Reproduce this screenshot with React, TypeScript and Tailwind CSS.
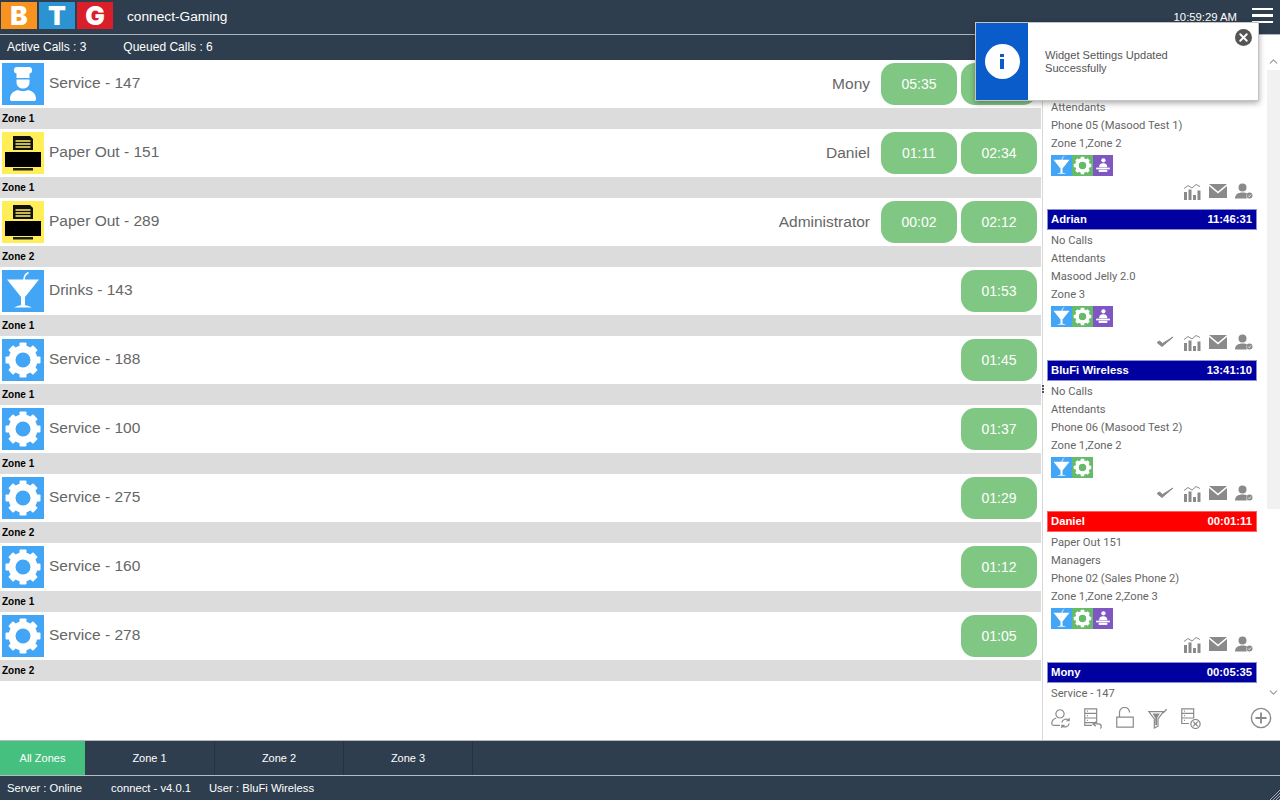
import { ChevronUp, ChevronDown, X } from "lucide-react";

type Kind = "chef" | "printer" | "drink" | "gear" | "desk";

const rows = [
  { kind: "chef", title: "Service - 147", zone: "Zone 1", name: "Mony", times: ["05:35", ""] },
  { kind: "printer", title: "Paper Out - 151", zone: "Zone 1", name: "Daniel", times: ["01:11", "02:34"] },
  { kind: "printer", title: "Paper Out - 289", zone: "Zone 2", name: "Administrator", times: ["00:02", "02:12"] },
  { kind: "drink", title: "Drinks - 143", zone: "Zone 1", name: "", times: ["01:53"] },
  { kind: "gear", title: "Service - 188", zone: "Zone 1", name: "", times: ["01:45"] },
  { kind: "gear", title: "Service - 100", zone: "Zone 1", name: "", times: ["01:37"] },
  { kind: "gear", title: "Service - 275", zone: "Zone 2", name: "", times: ["01:29"] },
  { kind: "gear", title: "Service - 160", zone: "Zone 1", name: "", times: ["01:12"] },
  { kind: "gear", title: "Service - 278", zone: "Zone 2", name: "", times: ["01:05"] },
] as const;

// first card sits under the toast, only its lower lines can be read
const cards = [
  { name: "", time: "", red: false, lines: ["", "Attendants", "Phone 05 (Masood Test 1)", "Zone 1,Zone 2"], icons: 3, check: false },
  { name: "Adrian", time: "11:46:31", red: false, lines: ["No Calls", "Attendants", "Masood Jelly 2.0", "Zone 3"], icons: 3, check: true },
  { name: "BluFi Wireless", time: "13:41:10", red: false, lines: ["No Calls", "Attendants", "Phone 06 (Masood Test 2)", "Zone 1,Zone 2"], icons: 2, check: true },
  { name: "Daniel", time: "00:01:11", red: true, lines: ["Paper Out 151", "Managers", "Phone 02 (Sales Phone 2)", "Zone 1,Zone 2,Zone 3"], icons: 3, check: false },
  { name: "Mony", time: "00:05:35", red: false, lines: ["Service - 147"], icons: 0, check: false },
];

function Glyph({ kind }: { kind: Kind }) {
  if (kind === "chef") {
    return (
      <svg viewBox="0 0 42 42" className="h-full w-full">
        <rect x="12" y="4" width="18" height="6.500" rx="3" fill="#fff" />
        <rect x="14.500" y="9" width="13" height="6" fill="#fff" />
        <path d="M14.500 16.500h13V19c0 4-2.500 6.500-6.500 6.500s-6.500-2.500-6.500-6.500z" fill="#fff" />
        <path d="M8 36c0-5 3-8 8-9 2.500 1.500 7.500 1.500 10 0 5 1 8 4 8 9 0 1.500-1 2-2 2H10c-1 0-2-.5-2-2z" fill="#fff" />
      </svg>
    );
  }
  if (kind === "printer") {
    return (
      <svg viewBox="0 0 42 42" className="h-full w-full">
        <path d="M11 4h17l3 3v11H11z" fill="#111" />
        <path d="M13.500 8h15v2h-15zM13.500 11h15v2h-15zM13.500 14h15v2h-15z" fill="#c9b84a" />
        <rect x="3" y="20" width="36" height="15" fill="#000" />
        <rect x="11" y="36" width="20" height="2.500" fill="#222" />
      </svg>
    );
  }
  if (kind === "drink") {
    return (
      <svg viewBox="0 0 42 42" className="h-full w-full">
        <path d="M5 9.500h32L23 27v8c0 .5 4 .8 7 2.500H12c3-1.700 7-2 7-2.500v-8z" fill="#fff" />
        <path d="M22 10c0-3 1.500-6 4.500-7.500" stroke="#fff" strokeWidth="1.600" fill="none" />
      </svg>
    );
  }
  if (kind === "desk") {
    return (
      <svg viewBox="0 0 42 42" className="h-full w-full">
        <circle cx="22" cy="9" r="5" fill="#fff" />
        <path d="M12 25c0-7 4-9 10-9s9 3 9 9z" fill="#fff" />
        <rect x="5" y="26" width="32" height="4" fill="#fff" />
        <rect x="11" y="31" width="20" height="5" fill="#fff" />
      </svg>
    );
  }
  return (
    <svg viewBox="0 0 42 42" className="h-full w-full">
      {[0, 45, 90, 135, 180, 225, 270, 315].map((a) => (
        <rect key={a} x="17.500" y="3.500" width="7" height="9" rx="1" fill="#fff" transform={`rotate(${a} 21 21)`} />
      ))}
      <circle cx="21" cy="21" r="11" fill="none" stroke="#fff" strokeWidth="7" />
    </svg>
  );
}

function CheckIcon() {
  return (
    <svg viewBox="0 0 18 14" className="h-[14px] w-[18px]">
      <path d="M1 7.500l5 4L17 2l-10.500 6.500L3.500 6z" fill="#8a8a8a" stroke="#8a8a8a" strokeWidth="1" strokeLinejoin="round" />
    </svg>
  );
}

function ChartIcon() {
  return (
    <svg viewBox="0 0 18 18" className="h-[18px] w-[18px]">
      <path d="M1 6.500l4-3 4 2.500 4-3.500 4 2" fill="none" stroke="#8a8a8a" strokeWidth="1" />
      <path d="M1 10h3v8H1zM5.500 7.500h3V18h-3zM10 13h3v5h-3zM14.500 8.500h3V18h-3z" fill="#8a8a8a" />
    </svg>
  );
}

function MailIcon() {
  return (
    <svg viewBox="0 0 18 14" className="h-[14px] w-[18px]">
      <path d="M0 0h18L9 7.500z" fill="#8a8a8a" />
      <path d="M0 2l9 7.500L18 2v12H0z" fill="#8a8a8a" />
    </svg>
  );
}

function UserBadgeIcon() {
  return (
    <svg viewBox="0 0 18 16" className="h-[16px] w-[18px]">
      <circle cx="7.500" cy="4.500" r="4" fill="#8a8a8a" />
      <path d="M0 15.500c0-4 3-6 7.500-6 2 0 3.500.4 4.500 1-1 1.500-1 3.500 0 5z" fill="#8a8a8a" />
      <circle cx="14.500" cy="12.500" r="3" fill="#8a8a8a" />
      <path d="M13 12.500l1.200 1.200 2-2.200" stroke="#fff" strokeWidth=".8" fill="none" />
    </svg>
  );
}

function ToolIcon({ d, extra }: { d: string; extra?: React.ReactNode }) {
  return (
    <svg viewBox="0 0 24 24" className="h-[22px] w-[22px]" fill="none" stroke="#8a8a8a" strokeWidth="1.300">
      <path d={d} />
      {extra}
    </svg>
  );
}

function Card({ card }: { card: (typeof cards)[number] }) {
  return (
    <div className="h-[151px] shrink-0">
      <div
        className={`flex h-[21px] w-[210px] items-center justify-between border pl-[3px] pr-[4px] text-[11.300px] font-bold text-white ${
          card.red ? "border-[#ff6060] bg-[#ff0000]" : "border-[#8d8dd6] bg-[#0000a0]"
        }`}
      >
        <span>{card.name}</span>
        <span>{card.time}</span>
      </div>
      <div className="mt-[2px] pl-[4px] font-['Roboto',sans-serif] text-[11.200px] leading-[18px] text-[#666]">
        {card.lines.map((l) => (
          <div key={l} className="flex h-[18px] items-center">
            {l}
          </div>
        ))}
      </div>
      {card.icons > 0 && (
        <>
          <div className="ml-[4px] mt-[2px] flex h-[21px]">
            <span className="h-[21px] w-[21px] bg-[#42a5f5]">
              <Glyph kind="drink" />
            </span>
            <span className="h-[21px] w-[21px] bg-[#66bb6a]">
              <Glyph kind="gear" />
            </span>
            {card.icons > 2 && (
              <span className="h-[21px] w-[20px] bg-[#7e57c2] p-[1px]">
                <Glyph kind="desk" />
              </span>
            )}
          </div>
          <div className="mt-[6px] flex h-[18px] w-[206px] items-center justify-end gap-[8px]">
            {card.check && (
              <span className="mr-[1px]">
                <CheckIcon />
              </span>
            )}
            <ChartIcon />
            <MailIcon />
            <UserBadgeIcon />
          </div>
        </>
      )}
    </div>
  );
}

export default function App() {
  return (
    <div className="relative flex h-[800px] w-[1280px] flex-col overflow-hidden bg-white font-['Liberation_Sans',Arial,sans-serif]">
      {/* top bar */}
      <div className="flex h-[35px] shrink-0 items-center border-b border-[#aeb6bd] bg-[#2f3e4e] pl-[1px] pr-[7px] text-white">
        <div className="flex gap-[2px] pb-[3px] font-['Inter',sans-serif] text-[26px] font-black leading-[27px]">
          <span className="flex h-[27px] w-[36px] items-center justify-center bg-[#f7931e]">B</span>
          <span className="flex h-[27px] w-[36px] items-center justify-center bg-[#2b93d1]">T</span>
          <span className="flex h-[27px] w-[36px] items-center justify-center bg-[#d81f2a]">G</span>
        </div>
        <span className="ml-[14px] text-[13.700px]">connect-Gaming</span>
        <span className="ml-auto text-[11.300px]">10:59:29 AM</span>
        <div className="mb-[3px] ml-[15px] flex w-[21px] flex-col gap-[4px]">
          <span className="h-[2.500px] bg-white" />
          <span className="h-[2.500px] bg-white" />
          <span className="h-[2.500px] bg-white" />
        </div>
      </div>

      <div className="flex min-h-0 flex-1">
        {/* calls */}
        <div className="flex w-[1041px] shrink-0 flex-col">
          <div className="flex h-[25px] shrink-0 items-center gap-[37px] bg-[#2f3e4e] pb-[1px] pl-[7px] text-[12px] text-white">
            <span>Active Calls : 3</span>
            <span>Queued Calls : 6</span>
          </div>
          {rows.map((r) => (
            <div key={r.title} className="shrink-0">
              <div className="flex h-[48px] items-start pl-[2px] pr-[4px] pt-[3px] text-[15.500px] text-[#666]">
                <span className="h-[42px] w-[42px] shrink-0 bg-[#42a5f5]" style={r.kind === "printer" ? { background: "#ffee58" } : undefined}>
                  <Glyph kind={r.kind} />
                </span>
                <span className="ml-[5px] mt-[10.500px] leading-[18px]">{r.title}</span>
                <div className="ml-auto flex items-center">
                  {r.name && <span className="mr-[11px]">{r.name}</span>}
                  <div className="flex gap-[4px]">
                    {r.times.map((t) => (
                      <span key={t} className="flex h-[42px] w-[76px] items-center justify-center rounded-[14px] bg-[#81c784] text-[14px] text-white">
                        {t}
                      </span>
                    ))}
                  </div>
                </div>
              </div>
              <div className="flex h-[21px] items-center bg-[#dcdcdc] pl-[2px] text-[10px] font-bold text-black">{r.zone}</div>
            </div>
          ))}
        </div>

        {/* splitter */}
        <div className="w-[4px] shrink-0 border-l border-r-2 border-white bg-[#d8d8d8]" />

        {/* users */}
        <div className="flex min-w-0 flex-1 flex-col">
          <div className="flex h-[665px] min-h-0 shrink-0">
            <div className="h-full w-[222px] shrink-0 overflow-hidden pl-[2px] pt-[23px]">
              {cards.map((c, i) => (
                <Card key={i} card={c} />
              ))}
            </div>
            <div className="flex h-full w-[14px] flex-col items-center pt-[20px]">
              <ChevronUp size={13} className="shrink-0 text-[#999]" />
              <div className="mt-[2px] h-[439px] w-full shrink-0 bg-[#f1f1f1]" />
              <ChevronDown size={13} className="mt-auto mb-[1px] shrink-0 text-[#999]" />
            </div>
          </div>
          <div className="flex h-[40px] items-center pb-[4px] pl-[4px] pr-[8px]">
            <div className="flex gap-[10.500px]">
              <ToolIcon
                d="M12 3a4.500 4.500 0 1 1-.01 0M8 12c-3 1-5 3.500-5 6 0 1 .5 2 2 2h7"
                extra={<path d="M14 17a4.500 4.500 0 0 1 8-2m0 3a4.500 4.500 0 0 1-8 2M22 12v3h-3M14 23v-3h3" />}
              />
              <ToolIcon
                d="M3 2h13v5H3zM3 7h13v5H3zM3 12h13v5H3zM3 17v3h8M5.500 4.500h1M5.500 9.500h1M5.500 14.500h1"
                extra={<path d="M15 16l-3 2.500 3 2.500M12 18.500h6a3 3 0 0 1 3 3c0 1-.5 1.500-1 2" />}
              />
              <ToolIcon d="M3 11h18v11H3zM6 11V6a5.500 5.500 0 0 1 11 0" />
              <ToolIcon
                d="M2 5h16l-6 8v8l-4 2V13z"
                extra={<path d="M6 7h8l-3 5v8h-2v-8zM17 6l4-4 1 1-4 4z" fill="#8a8a8a" stroke="none" />}
              />
              <ToolIcon
                d="M3 2h13v5H3zM3 7h13v5H3zM3 12h10M3 12v6h8M16 7v5M5.500 4.500h1M5.500 9.500h1M5.500 14.500h1"
                extra={<path d="M18 13.500a5 5 0 1 1-.01 0M15.500 16l5 5M20.500 16l-5 5" />}
              />
            </div>
            <svg viewBox="0 0 24 24" className="ml-auto h-[22px] w-[22px]" fill="none" stroke="#8a8a8a" strokeWidth="1.500">
              <circle cx="12" cy="12" r="10.500" />
              <path d="M12 6v12M6 12h12" strokeWidth="2" />
            </svg>
          </div>
        </div>
      </div>

      {/* zones */}
      <div className="flex h-[36px] shrink-0 border-y border-[#b5bbc1] bg-[#2f3e4e] text-[11px] text-white">
        <div className="flex w-[85px] items-center justify-center bg-[#45c07e]">All Zones</div>
        <div className="flex w-[130px] items-center justify-center border-r border-[#26333f]">Zone 1</div>
        <div className="flex w-[129px] items-center justify-center border-r border-[#26333f]">Zone 2</div>
        <div className="flex w-[129px] items-center justify-center border-r border-[#26333f]">Zone 3</div>
      </div>

      {/* status */}
      <div className="flex h-[24px] shrink-0 items-center bg-[#2f3e4e] pl-[7px] text-[11.250px] text-white">
        <span className="w-[104px]">Server : Online</span>
        <span className="w-[98px]">connect - v4.0.1</span>
        <span>User : BluFi Wireless</span>
      </div>

      {/* splitter grip */}
      <div className="absolute left-[1042px] top-[385px] flex flex-col gap-[1px]">
        <span className="h-[2px] w-[2px] bg-[#555]" />
        <span className="h-[2px] w-[2px] bg-[#555]" />
        <span className="h-[2px] w-[2px] bg-[#555]" />
      </div>

      {/* resize grip */}
      <svg viewBox="0 0 10 10" className="absolute bottom-0 right-0 h-[10px] w-[10px]" stroke="#aab" strokeWidth="1">
        <path d="M0 10L10 0M3 10l7-7M6 10l4-4M9 10l1-1" />
      </svg>

      {/* toast */}
      <div className="absolute left-[975px] top-[22px] flex h-[79px] w-[284px] border border-[#c4c4c4] bg-white shadow-[0_2px_6px_rgba(0,0,0,0.35)]">
        <div className="flex w-[52px] shrink-0 items-center justify-center bg-[#0b5ccb]">
          <div className="flex h-[35px] w-[35px] flex-col items-center justify-center gap-[2px] rounded-full bg-white">
            <span className="h-[3.500px] w-[4px] bg-[#0b5ccb]" />
            <span className="h-[10px] w-[4px] bg-[#0b5ccb]" />
          </div>
        </div>
        <div className="flex items-center pl-[17px] pr-[70px] text-[11.100px] leading-[13px] text-[#555]">
          Widget Settings Updated Successfully
        </div>
        <div className="absolute right-[6px] top-[6px] flex h-[17px] w-[17px] items-center justify-center rounded-full bg-[#555]">
          <X size={13} strokeWidth={3.5} className="text-white" />
        </div>
      </div>
    </div>
  );
}
